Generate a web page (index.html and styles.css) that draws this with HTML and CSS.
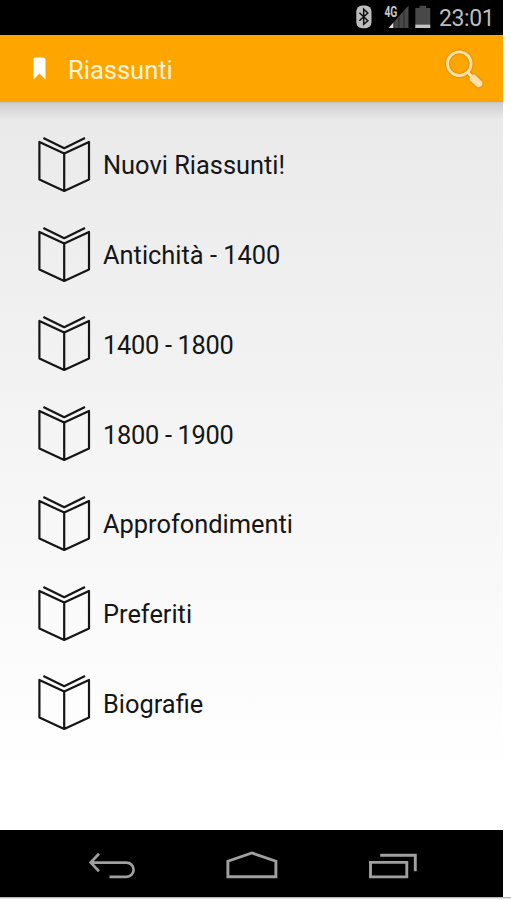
FILE: index.html
```html
<!DOCTYPE html>
<html lang="it">
<head>
    <meta charset="UTF-8">
    <title>Riassunti</title>
    <link rel="stylesheet" href="styles.css">
</head>
<body>
    <svg class="sprite" width="0" height="0">
        <symbol id="book" viewBox="0 0 54 58">
            <path d="M2.4 5.9 27.2 17.6 52 5.9V43.4L27.2 54.9 2.4 43.4ZM27.2 17.6V54.9M6.4 2.1 27.2 12.2 48 2.1" fill="none" stroke="#151515" stroke-width="2.2" stroke-linejoin="round"/>
        </symbol>
    </svg>
    <div class="phone">
        <div class="status-bar">
            <svg class="bluetooth" width="16" height="24" viewBox="0 0 16 24">
                <rect x="0.3" y="0.4" width="15.2" height="22.8" rx="6" fill="#bdbdbd"/>
                <path d="M3.4 7.8 11.8 15.8 7.7 19.4V4.2L11.8 8 3.4 15.8" fill="none" stroke="#111" stroke-width="1.5"/>
            </svg>
            <svg class="signal" width="26" height="24" viewBox="0 0 26 24">
                <path d="M24.5 0.5V23H4.5Z" fill="#484848"/>
                <path d="M9.5 17.5V23H4.5Z" fill="#ddd"/>
                <path d="M10 12V23M15 10V23M20 5V23" stroke="#222" stroke-width="0.8"/>
                <text class="network" x="0.4" y="11.8" textLength="13" lengthAdjust="spacingAndGlyphs">4G</text>
            </svg>
            <svg class="battery" width="16" height="24" viewBox="0 0 16 24">
                <path d="M4.5 0.8H11V3H15.3V19.5H0.3V3H4.5Z" fill="#484848"/>
                <path d="M0.3 19.5H15.3V23H0.3Z" fill="#c4c4c4"/>
            </svg>
            <span class="clock">23:01</span>
        </div>
        <div class="header">
            <svg class="bookmark" width="13" height="23" viewBox="0 0 13 23">
                <path d="M0.5 22.5V3Q0.5 0.5 3 0.5H10Q12.5 0.5 12.5 3V22.5L6.5 16.5Z" fill="#fff"/>
            </svg>
            <span class="title">Riassunti</span>
            <svg class="search" width="40" height="40" viewBox="0 0 40 40">
                <circle cx="14.3" cy="14.7" r="11.8" fill="none" stroke="#ffe0a8" stroke-width="2.9"/>
                <path d="M22.5 23 27 28" stroke="#ffe0a8" stroke-width="3"/>
                <path d="M24.3 29.3 27.3 25.4H29.8L37.3 33Q38.3 36.8 34.3 38.2H32.5L24.9 31.4Z" fill="#ffe0a8"/>
            </svg>
        </div>
        <div class="menu">
            <div class="item"><svg class="book"><use href="#book"/></svg><span>Nuovi Riassunti!</span></div>
            <div class="item"><svg class="book"><use href="#book"/></svg><span>Antichità - 1400</span></div>
            <div class="item years"><svg class="book"><use href="#book"/></svg><span>1400 - 1800</span></div>
            <div class="item years"><svg class="book"><use href="#book"/></svg><span>1800 - 1900</span></div>
            <div class="item"><svg class="book"><use href="#book"/></svg><span>Approfondimenti</span></div>
            <div class="item"><svg class="book"><use href="#book"/></svg><span>Preferiti</span></div>
            <div class="item"><svg class="book"><use href="#book"/></svg><span>Biografie</span></div>
        </div>
        <div class="nav-bar">
            <svg width="48" height="30" viewBox="0 0 48 30">
                <path d="M11 2.8 2.7 11.6 11 20.2M2.7 11.6H38.5A7.1 7.1 0 0 1 38.5 25.8H21.5" fill="none" stroke="#a0a0a0" stroke-width="2.7"/>
            </svg>
            <svg width="54" height="30" viewBox="0 0 54 30">
                <path d="M2.9 25.8V10.2L26.9 2 50.9 10.2V25.8Z" fill="none" stroke="#a0a0a0" stroke-width="2.9"/>
            </svg>
            <svg width="50" height="30" viewBox="0 0 50 30">
                <path d="M2.5 11.4H38.8V25.9H2.5ZM12.2 4.3H47.3V20.3" fill="none" stroke="#a0a0a0" stroke-width="2.9"/>
            </svg>
        </div>
    </div>
</body>
</html>
```
FILE: styles.css
```css
body {
    margin: 0;
    height: 900px;
    overflow: hidden;
    background: #fff;
    font-family: Roboto, Arial, sans-serif;
}

.sprite {
    display: none;
}

.phone {
    width: 503px;
    height: 897px;
    display: flex;
    flex-direction: column;
}

/* grey rule running under the phone */
body::after {
    content: "";
    display: block;
    height: 1px;
    background: #b4b4b4;
    box-shadow: 0 1px #e8e8e8;
}

.status-bar {
    display: flex;
    box-sizing: border-box;
    height: 35px;
    padding: 5px 0 0 356px;
    background: #000;
    color: #bdbdbd;
}

.signal {
    margin-left: 12px;
}

.battery {
    margin-left: 5px;
}

.network {
    font-size: 14px;
    font-weight: bold;
    fill: #c8c8c8;
}

.clock {
    margin-left: 8px;
    font-size: 23px;
    line-height: 27px;
    letter-spacing: -0.4px;
}

.header {
    display: flex;
    align-items: center;
    box-sizing: border-box;
    height: 67px;
    padding: 0 18px 0 33px;
    background: #ffa500;
}

.title {
    margin-left: 22px;
    padding-top: 2px;
    font-size: 25.5px;
    color: #fff3dc;
}

.search {
    margin-left: auto;
    filter: drop-shadow(0 0 1px #b97800);
}

.menu {
    box-sizing: border-box;
    height: 728px;
    padding: 18px 0 0 37px;
    background: linear-gradient(#c2c2c2, #d0d0d0 2px, rgba(234, 234, 234, 0) 18px), linear-gradient(#eaeaea, #eaeaea 20px, #fff 92%);
}

.item {
    display: flex;
    align-items: center;
    height: 89.75px;
    font-size: 25.4px;
    color: #151515;
}

.item span {
    padding-top: 1px;
}

.years span {
    letter-spacing: -0.3px;
}

.book {
    width: 54px;
    height: 58px;
    margin-right: 12px;
}

.nav-bar {
    display: flex;
    box-sizing: border-box;
    height: 67px;
    padding: 21px 0 0 88px;
    gap: 89px;
    background: #000;
}
```
